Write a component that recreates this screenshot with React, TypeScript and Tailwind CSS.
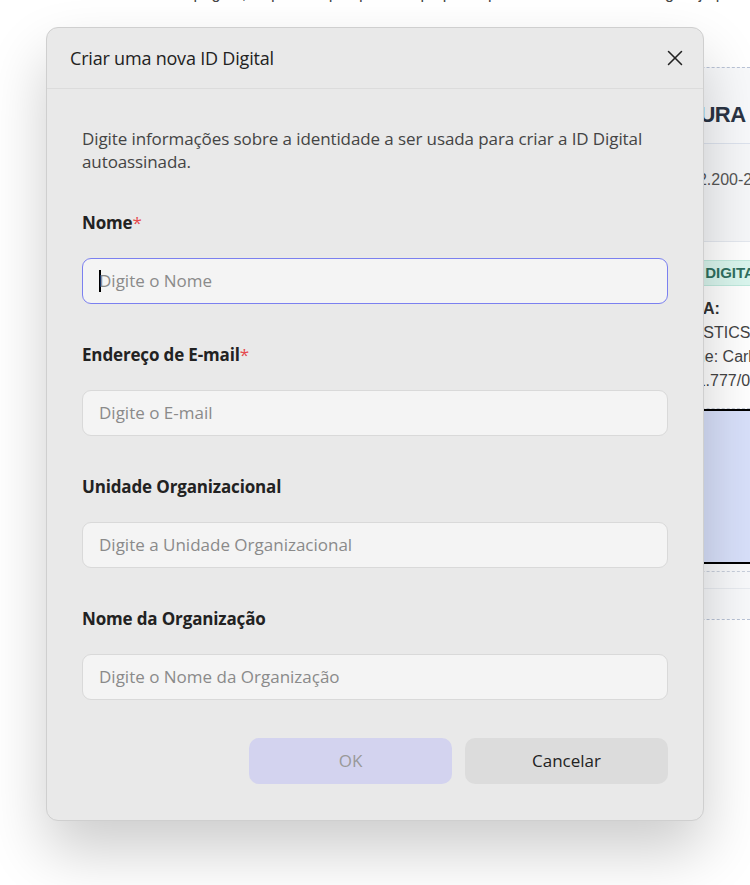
import { X } from "lucide-react";

const fields = [
  { label: "Nome", required: true, placeholder: "Digite o Nome", focused: true },
  { label: "Endereço de E-mail", required: true, placeholder: "Digite o E-mail" },
  { label: "Unidade Organizacional", required: false, placeholder: "Digite a Unidade Organizacional" },
  { label: "Nome da Organização", required: false, placeholder: "Digite o Nome da Organização" },
];

function BackgroundDoc() {
  return (
    <div className="flex h-full flex-col whitespace-nowrap font-['Liberation_Sans',Arial,sans-serif] text-[#333]">
      <p className="-mt-[16px] pl-[150px] text-[16px] leading-[20px] text-[#444]">
        desta página, clique em qualquer campo para aplicar a sua assinatura digital já pronta
      </p>
      <div className="ml-[560px] mt-[63px] flex-1 overflow-hidden border-t border-dashed border-[#b9c3d6] bg-[#f8f9fb]">
        <div className="border-b border-[#dde3ee] pb-[14px] pt-[33px]">
          <p className="pl-[48px] text-[22px] font-bold leading-[28px] tracking-[-0.5px] text-[#2a3444]">ASSINATURA DIGITAL</p>
        </div>
        <div className="h-[98px] border-b border-[#e4e8ef] bg-[#f6f7f9] pl-[92px] pt-[24px] text-[16px] leading-[24px] text-[#555]">
          CEP 22.200-200
        </div>
        <div className="bg-white pt-[18px]">
          <div className="ml-[105px] inline-block rounded-[3px] border border-[#bfe9dd] bg-[#daf6ee] px-[20px] py-[3px] text-[15px] font-bold leading-[18px] text-[#2f6f60]">
            ID DIGITAL
          </div>
          <div className="mt-[11px] text-[16px] leading-[24px] text-[#444]">
            <p className="pl-[71px] font-bold text-[#333]">ASSINADA:</p>
            <p className="pl-[105px]">LOGÍSTICS</p>
            <p className="pl-[111px]">Nome: Carlos</p>
            <p className="pl-[129px]">11.777/0001</p>
          </div>
          <div className="mt-[15px] border-t border-dashed border-[#c8cfdc]" />
        </div>
        <div className="h-[155px] border-y-2 border-black bg-[#d8e0fa]" />
        <div className="mt-[7px] border-t border-dashed border-[#c8cfdc]" />
        <div className="mt-[16px] h-[31px] border-t border-[#e8ebf0]" />
        <div className="h-full border-t border-dashed border-[#b9c3d6] bg-white" />
      </div>
    </div>
  );
}

export default function App() {
  return (
    <div className="relative h-[885px] w-[750px] overflow-hidden bg-white">
      <BackgroundDoc />

      <div className="absolute left-[46px] top-[27px] flex h-[794px] w-[658px] flex-col rounded-[12px] border border-[#cfcfcf] bg-[#e9e9e9] font-['Open_Sans','Noto_Sans',sans-serif] shadow-[0_30px_60px_rgba(0,0,0,0.2)]">
        <div className="flex h-[61px] shrink-0 items-center justify-between border-b border-[#dcdcdc] pl-[23px] pr-[15px]">
          <h2 className="text-[18px] tracking-[-0.2px] text-[#222]">Criar uma nova ID Digital</h2>
          <X className="h-[26px] w-[26px] text-[#222]" strokeWidth={1.4} />
        </div>

        <div className="flex flex-1 flex-col px-[35px] pt-[38px]">
          <p className="text-[17px] leading-[23px] tracking-[-0.1px] text-[#444]">
            Digite informações sobre a identidade a ser usada para criar a ID Digital autoassinada.
          </p>

          <div className="mt-[38px] flex flex-col gap-[39px]">
            {fields.map((f) => (
              <div key={f.label} className="flex flex-col gap-[24px]">
                <label className="text-[17px] font-bold leading-[23px] tracking-[-0.15px] text-[#222]">
                  {f.label}
                  {f.required && <span className="font-normal text-[#e5484d]">*</span>}
                </label>
                <div
                  className={`flex h-[46px] items-center rounded-[9px] border bg-[#f4f4f4] pl-[16px] text-[17px] text-[#8a8a8a] ${
                    f.focused ? "border-[#7b80f0]" : "border-[#d9d9d9]"
                  }`}
                >
                  {f.focused && <span className="-mr-[2px] h-[22px] w-[2px] bg-black" />}
                  {f.placeholder}
                </div>
              </div>
            ))}
          </div>

          <div className="mt-[38px] flex justify-end gap-[13px]">
            <button className="h-[46px] w-[203px] rounded-[10px] bg-[#d3d3ef] text-[17px] text-[#999]">OK</button>
            <button className="h-[46px] w-[203px] rounded-[10px] bg-[#dcdcdc] text-[17px] text-[#222]">Cancelar</button>
          </div>
        </div>
      </div>
    </div>
  );
}
